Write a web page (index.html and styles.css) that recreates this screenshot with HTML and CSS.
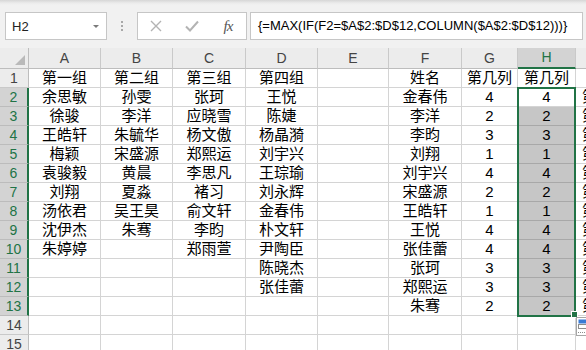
FILE: index.html
```html
<!DOCTYPE html>
<html lang="zh-CN">
<head>
    <meta charset="UTF-8">
    <title>Excel - 第几列</title>
    <link rel="stylesheet" href="styles.css">
</head>
<body>
    <div class="formula-bar">
        <div class="name-box"><span>H2</span><span class="caret"></span></div>
        <div class="grip"><i></i><i></i><i></i></div>
        <div class="fx-buttons">
            <span class="fx-btn">
                <svg width="12" height="12" viewBox="0 0 12 12"><path d="M1 1L11 11M11 1L1 11" stroke="#b3b3b3" stroke-width="1.4" fill="none"/></svg>
            </span>
            <span class="fx-btn">
                <svg width="14" height="12" viewBox="0 0 14 12"><path d="M1 6.5L5 10.5L13 1.5" stroke="#b3b3b3" stroke-width="2" fill="none"/></svg>
            </span>
            <span class="fx-btn fx">fx</span>
        </div>
        <div class="formula-input">{=MAX(IF(F2=$A$2:$D$12,COLUMN($A$2:$D$12)))}</div>
    </div>

    <div class="sheet">
        <div class="corner"><span class="tri"></span></div>
        <div class="ch">A</div><div class="ch">B</div><div class="ch">C</div><div class="ch">D</div><div class="ch">E</div><div class="ch">F</div><div class="ch">G</div><div class="ch on">H</div><div class="ch">I</div>

        <div class="rh">1</div><div>第一组</div><div>第二组</div><div>第三组</div><div>第四组</div><div></div><div>姓名</div><div>第几列</div><div>第几列</div><div></div>
        <div class="rh on">2</div><div>余思敏</div><div>孙雯</div><div>张珂</div><div>王悦</div><div></div><div>金春伟</div><div>4</div><div>4</div><div class="i">第4列</div>
        <div class="rh on">3</div><div>徐骏</div><div>李洋</div><div>应晓雪</div><div>陈婕</div><div></div><div>李洋</div><div>2</div><div class="hs">2</div><div class="i">第2列</div>
        <div class="rh on">4</div><div>王皓轩</div><div>朱毓华</div><div>杨文傲</div><div>杨晶漪</div><div></div><div>李昀</div><div>3</div><div class="hs">3</div><div class="i">第3列</div>
        <div class="rh on">5</div><div>梅颖</div><div>宋盛源</div><div>郑熙运</div><div>刘宇兴</div><div></div><div>刘翔</div><div>1</div><div class="hs">1</div><div class="i">第1列</div>
        <div class="rh on">6</div><div>袁骏毅</div><div>黄晨</div><div>李思凡</div><div>王琮瑜</div><div></div><div>刘宇兴</div><div>4</div><div class="hs">4</div><div class="i">第4列</div>
        <div class="rh on">7</div><div>刘翔</div><div>夏淼</div><div>褚习</div><div>刘永辉</div><div></div><div>宋盛源</div><div>2</div><div class="hs">2</div><div class="i">第2列</div>
        <div class="rh on">8</div><div>汤依君</div><div>吴王昊</div><div>俞文轩</div><div>金春伟</div><div></div><div>王皓轩</div><div>1</div><div class="hs">1</div><div class="i">第1列</div>
        <div class="rh on">9</div><div>沈伊杰</div><div>朱骞</div><div>李昀</div><div>朴文轩</div><div></div><div>王悦</div><div>4</div><div class="hs">4</div><div class="i">第4列</div>
        <div class="rh on">10</div><div>朱婷婷</div><div></div><div>郑雨萱</div><div>尹陶臣</div><div></div><div>张佳蕾</div><div>4</div><div class="hs">4</div><div class="i">第4列</div>
        <div class="rh on">11</div><div></div><div></div><div></div><div>陈晓杰</div><div></div><div>张珂</div><div>3</div><div class="hs">3</div><div class="i">第3列</div>
        <div class="rh on">12</div><div></div><div></div><div></div><div>张佳蕾</div><div></div><div>郑熙运</div><div>3</div><div class="hs">3</div><div class="i">第3列</div>
        <div class="rh on">13</div><div></div><div></div><div></div><div></div><div></div><div>朱骞</div><div>2</div><div class="hs">2</div><div class="i">第2列</div>
        <div class="rh">14</div><div></div><div></div><div></div><div></div><div></div><div></div><div></div><div></div><div></div>
        <div class="rh">15</div><div></div><div></div><div></div><div></div><div></div><div></div><div></div><div></div><div></div>

        <!-- selection H2:H13 -->
        <div class="selection"></div>
        <div class="handle"></div>
        <div class="quick">
            <svg width="14" height="17" viewBox="0 0 14 17">
                <rect x="1.5" y="1.5" width="9" height="4" fill="#3a7bd5"/>
                <rect x="1.5" y="6.5" width="9" height="4" fill="#fff" stroke="#8c8c8c"/>
                <path d="M1 14.5H12" stroke="#8c8c8c" stroke-dasharray="1 1"/>
            </svg>
        </div>
    </div>
</body>
</html>
```

FILE: styles.css
```css
* { box-sizing: border-box; }
body { margin: 0; width: 586px; height: 350px; overflow: hidden; background: #fff; font-family: "Liberation Sans", "Noto Sans CJK SC", sans-serif; }

.formula-bar { height: 48px; display: flex; align-items: flex-start; padding-top: 12px; background: linear-gradient(#d6d6d6, #ebebeb 3px, #f1f1f1 5px); }
.name-box { margin-left: 5px; width: 102px; height: 28px; border: 1px solid #c6c6c6; background: #fff; display: flex; align-items: center; justify-content: space-between; padding: 0 7px 0 6px; font-size: 13px; color: #222; }
.caret { width: 0; height: 0; border-left: 3px solid transparent; border-right: 3px solid transparent; border-top: 3px solid #7a7a7a; }
.grip { width: 30px; height: 28px; display: flex; flex-direction: column; align-items: center; justify-content: center; gap: 2px; }
.grip i { width: 2px; height: 2px; background: #a8a8a8; }
.fx-buttons { width: 110px; height: 28px; border: 1px solid #c6c6c6; background: #fff; display: flex; align-items: center; }
.fx-btn { width: 36px; display: flex; justify-content: center; align-items: center; }
.fx-btn.fx { font-family: "Liberation Serif", serif; font-style: italic; font-size: 15px; color: #555; letter-spacing: -1px; }
.formula-input { flex: 1; height: 28px; margin: 0 3px 0 3px; border: 1px solid #c6c6c6; background: #fff; padding-left: 7px; font-size: 13px; line-height: 26px; color: #000; white-space: nowrap; overflow: hidden; }

.sheet { position: relative; width: 636px; display: grid; grid-template-columns: 29px 72px 72px 73px 72px 71px 73px 56px 58px 60px; grid-template-rows: 21px; grid-auto-rows: 19px; }
.sheet > div { border-right: 1px solid #d4d4d4; border-bottom: 1px solid #d4d4d4; text-align: center; font-size: 15px; line-height: 18px; white-space: nowrap; overflow: hidden; color: #000; }
.sheet > .corner { background: #ececec; border-right: 1px solid #bdbdbd; border-bottom: 1px solid #bdbdbd; position: relative; }
.tri { position: absolute; right: 3px; bottom: 3px; width: 0; height: 0; border-left: 10px solid transparent; border-bottom: 10px solid #b9b9b9; }
.sheet > .ch { background: #ececec; border-right: 1px solid #c9c9c9; border-bottom: 1px solid #bdbdbd; font-size: 14px; line-height: 20px; color: #444; }
.sheet > .ch.on { background: #d3d3d3; color: #217346; border-bottom: 2px solid #217346; line-height: 19px; }
.sheet > .rh { background: #ececec; border-right: 1px solid #bdbdbd; border-bottom: 1px solid #c9c9c9; font-size: 14px; color: #444; }
.sheet > .rh.on { background: #d3d3d3; color: #217346; border-right: 2px solid #217346; border-bottom-color: #bcbcbc; }
.sheet > .hs { background: #c6c6c6; border-bottom-color: #a8a8a8; }
.sheet > .i { text-align: left; padding-left: 6px; }

.sheet > .selection { position: absolute; left: 517px; top: 39px; width: 59px; height: 230px; border: 2px solid #217346; background: transparent; }
.sheet > .handle { position: absolute; left: 571px; top: 263px; width: 7px; height: 7px; background: #217346; border: 1px solid #fff; }
.sheet > .quick { position: absolute; left: 576px; top: 269px; width: 16px; height: 19px; background: #fff; border: 1px solid #a6a6a6; padding: 0; }
.quick svg { display: block; }
```
